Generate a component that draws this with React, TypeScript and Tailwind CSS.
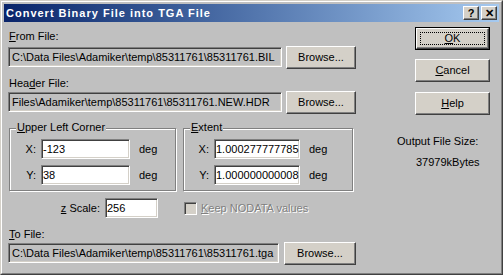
import React from 'react';

const font = "font-['Liberation_Sans',Arial,sans-serif]";

// classic 3d bevels
const raised =
    'border border-t-white border-l-white border-r-[#404040] border-b-[#404040] shadow-[inset_-1px_-1px_0_#808080] bg-[#d4d0c8]';
const sunken =
    'border border-t-[#808080] border-l-[#808080] border-r-white border-b-white shadow-[inset_1px_1px_0_#404040,inset_-1px_-1px_0_#d4d0c8]';

const U = ({ children }: { children: React.ReactNode }) => <span className="underline underline-offset-[1px]">{children}</span>;

const Button = ({ children, className = '' }: { children: React.ReactNode; className?: string }) => (
    <div className={`${raised} flex items-center justify-center text-black ${className}`}>{children}</div>
);

const Field = ({ value, white, className = '' }: { value: string; white?: boolean; className?: string }) => (
    <div
        className={`${sunken} ${white ? 'bg-white px-[1px]' : 'bg-[#c0c0c0] px-[3px]'} h-[20px] flex items-center overflow-hidden whitespace-nowrap ${className}`}
    >
        {value}
    </div>
);

const GroupBox = ({ title, children, className = '' }: { title: React.ReactNode; children: React.ReactNode; className?: string }) => (
    <div className={`relative mt-[6px] border border-[#808080] shadow-[1px_1px_0_white,inset_1px_1px_0_white] ${className}`}>
        <span className="absolute -top-[8px] left-[6px] bg-[#c0c0c0] px-[1px] leading-[13px]">{title}</span>
        {children}
    </div>
);

const CoordRow = ({ axis, value, fieldW, labelW }: { axis: string; value: string; fieldW: string; labelW: string }) => (
    <div className="flex items-center h-[20px]">
        <span className={`${labelW} text-right pr-[5px]`}>{axis}</span>
        <Field value={value} white className={fieldW} />
        <span className="ml-[9px]">deg</span>
    </div>
);

export default function App() {
    return (
        <div className={`w-[503px] h-[275px] ${font} text-[11px] leading-[13px] text-black bg-[#c0c0c0]`}>
            <div className="w-full h-full border border-t-[#d4d0c8] border-l-[#d4d0c8] border-r-[#404040] border-b-[#404040]">
                <div className="w-full h-full border border-t-white border-l-white border-r-[#808080] border-b-[#808080] p-[2px] flex flex-col">
                    {/* title bar */}
                    <div className="h-[18px] flex items-center bg-gradient-to-r from-[#0a246a] to-[#a6caf0] px-[2px]">
                        <span className="text-white font-bold text-[11px] tracking-[1px]">Convert Binary File into TGA File</span>
                        <div className="ml-auto flex items-center">
                            <Button className="w-[16px] h-[14px] font-bold text-[11px] leading-[12px]">?</Button>
                            <Button className="w-[16px] h-[14px] ml-[2px] font-bold text-[11px] leading-[12px]">✕</Button>
                        </div>
                    </div>

                    {/* body */}
                    <div className="flex flex-1 pl-[4px]">
                        {/* left column */}
                        <div className="w-[348px] flex flex-col">
                            <div className="mt-[8px] ml-[1px]"><U>F</U>rom File:</div>
                            <div className="mt-[3px] flex items-start h-[23px]">
                                <Field value="C:\Data Files\Adamiker\temp\85311761\85311761.BIL" className="w-[274px] mt-[1px]" />
                                <Button className="ml-auto w-[70px] h-[23px]">Browse...</Button>
                            </div>
                            <div className="mt-[8px] ml-[1px]">Hea<U>d</U>er File:</div>
                            <div className="mt-[1px] flex items-start h-[23px]">
                                <Field value="Files\Adamiker\temp\85311761\85311761.NEW.HDR" className="w-[274px] mt-[1px]" />
                                <Button className="ml-auto w-[70px] h-[23px]">Browse...</Button>
                            </div>

                            <div className="mt-[8px] flex">
                                <GroupBox title={<><U>U</U>pper Left Corner</>} className="ml-[1px] w-[167px] h-[63px] pt-[10px] flex flex-col gap-[6px]">
                                    <CoordRow axis="X:" value="-123" fieldW="w-[89px]" labelW="w-[31px]" />
                                    <CoordRow axis="Y:" value="38" fieldW="w-[89px]" labelW="w-[31px]" />
                                </GroupBox>
                                <GroupBox title={<><U>E</U>xtent</>} className="ml-[7px] w-[170px] h-[63px] pt-[10px] flex flex-col gap-[6px]">
                                    <CoordRow axis="X:" value="1.000277777785" fieldW="w-[86px]" labelW="w-[30px]" />
                                    <CoordRow axis="Y:" value="1.000000000008" fieldW="w-[86px]" labelW="w-[30px]" />
                                </GroupBox>
                            </div>

                            <div className="mt-[7px] flex items-center h-[20px]">
                                <span className="w-[97px] text-right pr-[5px]"><U>z</U> Scale:</span>
                                <Field value="256" white className="w-[53px]" />
                                <div className={`${sunken} bg-[#d4d0c8] w-[13px] h-[13px] ml-[26px]`} />
                                <span className="ml-[4px] text-[#808080] [text-shadow:1px_1px_0_#fff]"><U>K</U>eep NODATA values</span>
                            </div>

                            <div className="mt-[10px] ml-[1px]"><U>T</U>o File:</div>
                            <div className="mt-[1px] flex items-start h-[23px]">
                                <Field value="C:\Data Files\Adamiker\temp\85311761\85311761.tga" className="w-[271px] mt-[1px]" />
                                <Button className="ml-auto w-[72px] h-[23px]">Browse...</Button>
                            </div>
                        </div>

                        {/* right column */}
                        <div className="flex flex-col ml-[41px]">
                            <div className="mt-[5px] ml-[18px] w-[75px] h-[23px] border border-black">
                                <Button className="w-full h-full relative">
                                    <span className="absolute inset-[3px] border border-dotted border-black" />
                                    <U>O</U>K
                                </Button>
                            </div>
                            <Button className="mt-[9px] ml-[18px] w-[75px] h-[23px]"><U>C</U>ancel</Button>
                            <Button className="mt-[10px] ml-[18px] w-[75px] h-[23px]"><U>H</U>elp</Button>
                            <div className="mt-[20px]">Output File Size:</div>
                            <div className="mt-[8px] ml-[19px]">37979kBytes</div>
                        </div>
                    </div>
                </div>
            </div>
        </div>
    );
}
